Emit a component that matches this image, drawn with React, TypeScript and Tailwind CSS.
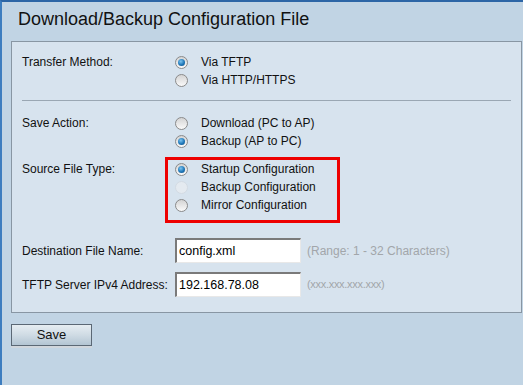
type Opt = { label: string; checked?: boolean; disabled?: boolean };

function Radio({ checked, disabled }: { checked?: boolean; disabled?: boolean }) {
  return (
    <span
      className={
        "flex h-[13px] w-[13px] items-center justify-center rounded-full border " +
        (disabled
          ? "border-[#d3dbe3] bg-[#e4eaf0]"
          : "border-[#8a8a8a] bg-gradient-to-b from-[#d4d4d4] to-[#fafafa]")
      }
    >
      {checked && (
        <span className="h-[7px] w-[7px] rounded-full bg-[radial-gradient(circle_at_40%_35%,#7cc4f0_0%,#1f77b8_55%,#0d4a80_100%)]" />
      )}
    </span>
  );
}

function RadioGroup({ opts }: { opts: Opt[] }) {
  return (
    <div className="flex flex-col">
      {opts.map((o) => (
        <div key={o.label} className="flex h-[18px] items-center">
          <span className="flex w-[26px]">
            <Radio checked={o.checked} disabled={o.disabled} />
          </span>
          <span className="text-[12px] text-[#111]">{o.label}</span>
        </div>
      ))}
    </div>
  );
}

function Row({
  label,
  children,
  className = "",
  labelClass = "",
}: {
  label: string;
  children: React.ReactNode;
  className?: string;
  labelClass?: string;
}) {
  return (
    <div className={"flex " + className}>
      <div className={"flex h-[18px] w-[153px] shrink-0 items-center text-[12px] text-[#111] " + labelClass}>{label}</div>
      {children}
    </div>
  );
}

function Field({ label, value, hint, small }: { label: string; value: string; hint: string; small?: boolean }) {
  return (
    <div className="flex h-[25px] items-center">
      <div className="w-[153px] shrink-0 text-[12px] text-[#111]">{label}</div>
      <div className="flex h-[25px] w-[126px] items-center border-t-2 border-l-2 border-r border-b border-t-[#7a7a7a] border-l-[#7a7a7a] border-r-[#e8e8e8] border-b-[#e8e8e8] bg-white pl-[2px] text-[12.5px] text-black">
        {value}
      </div>
      <span className={"ml-[6px] text-[#a2a6aa] " + (small ? "text-[11px] tracking-[-0.3px]" : "text-[12px]")}>{hint}</span>
    </div>
  );
}

export default function App() {
  return (
    <div
      className="flex h-[385px] w-[523px] flex-col overflow-hidden border-l-2 border-t-2 border-l-[#3d7dbf] border-t-[#2d66a6] bg-[#c1d4e4]"
      style={{ fontFamily: '"Liberation Sans", Arial, sans-serif' }}
    >
      <h1 className="ml-[16px] mt-[6px] h-[33px] text-[18px] leading-[22px] text-[#111]">
        Download/Backup Configuration File
      </h1>

      <div className="ml-[9px] mr-[1px] border border-[#8896a3] bg-[#d7e3ee] pl-[10px] pr-[10px]">
        <Row label="Transfer Method:" className="mt-[11px]">
          <RadioGroup opts={[{ label: "Via TFTP", checked: true }, { label: "Via HTTP/HTTPS" }]} />
        </Row>

        <div className="mt-[11px] h-px bg-[#9aa7b3]" />

        <Row label="Save Action:" className="mt-[13px]">
          <RadioGroup opts={[{ label: "Download (PC to AP)" }, { label: "Backup (AP to PC)", checked: true }]} />
        </Row>

        <Row label="Source File Type:" className="mt-[7px]" labelClass="mt-[3px]">
          <div className="-ml-[10px] border-[3px] border-[#ee0000] pl-[7px] pr-[21px] pb-[6px]">
            <RadioGroup
              opts={[
                { label: "Startup Configuration", checked: true },
                { label: "Backup Configuration", disabled: true },
                { label: "Mirror Configuration" },
              ]}
            />
          </div>
        </Row>

        <div className="mt-[15px] flex flex-col gap-[9px] pb-[15px]">
          <Field label="Destination File Name:" value="config.xml" hint="(Range: 1 - 32 Characters)" />
          <Field label="TFTP Server IPv4 Address:" value="192.168.78.08" hint="(xxx.xxx.xxx.xxx)" small />
        </div>
      </div>

      <button className="ml-[9px] mt-[11px] h-[22px] w-[81px] border border-[#5b6875] bg-gradient-to-b from-[#e6edf2] via-[#cfdbe4] to-[#b3c5d3] text-[13px] text-[#111] shadow-[0_2px_0_#d0d6dc]">
        Save
      </button>
    </div>
  );
}
